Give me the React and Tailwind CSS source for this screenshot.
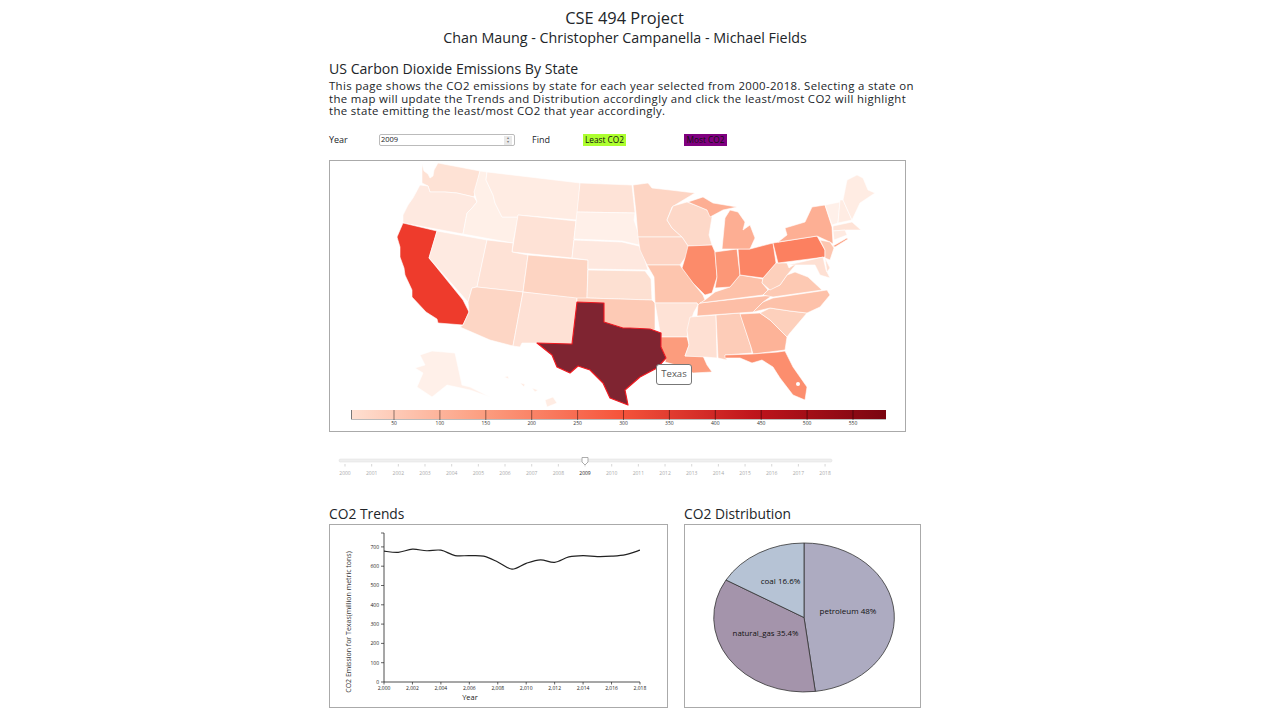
const STATES = [
  ["WA", "#fee2d5", "422,164 424,171 428,174 430,178 433,176 434,170 438,163 480,171 474,197 457,193 445,192 430,192 428,186 422,183"],
  ["OR", "#fee9e0", "420,185 428,186 430,192 445,192 457,193 474,197 477,202 472,208 467,213 463,234 403,223 403,215 408,205 413,198"],
  ["CA", "#ee3b2c", "403,223 437,231 429,258 463,300 469,312 463,325 438,323 437,319 426,312 412,297 412,290 405,275 404,268 400,257 400,247 397,237"],
  ["NV", "#feeae1", "437,231 487,240 477,287 472,288 470,295 468,302 429,258"],
  ["ID", "#fff0e8", "480,171 487,172 486,180 493,195 495,203 500,213 502,217 518,217 513,243 463,234 467,213 472,208 477,202 474,192"],
  ["MT", "#ffece3", "487,172 580,183 577,220 518,215 518,217 502,217 500,213 495,203 493,195 486,180"],
  ["WY", "#fee2d6", "518,215 576,221 572,258 512,252"],
  ["UT", "#fee2d6", "487,240 513,243 512,252 528,255 523,292 477,287"],
  ["CO", "#fdd4c2", "528,255 588,260 587,300 523,292"],
  ["AZ", "#fdd6c5", "477,287 523,292 513,346 490,340 460,327 463,325 469,312 468,302 470,295 472,288"],
  ["NM", "#fee1d5", "523,292 577,298 572,344 537,343 522,343 520,347 513,346"],
  ["ND", "#fee3d7", "580,183 632,185 635,213 577,212"],
  ["SD", "#fff0e9", "577,212 635,213 634,220 640,238 639,245 622,241 574,239"],
  ["NE", "#fee8df", "574,240 622,242 639,246 643,254 648,270 588,269 588,260 572,258"],
  ["KS", "#fde0d2", "588,270 645,271 651,279 652,300 587,298"],
  ["OK", "#fdcab5", "577,298 587,298 652,300 655,303 655,330 650,329 630,328 623,328 604,322 604,303 577,302"],
  ["MN", "#fdd5c4", "633,185 648,183 652,188 670,190 695,193 680,202 672,207 667,220 672,228 682,237 638,237 636,213"],
  ["WI", "#fdd8c8", "673,206 687,202 700,207 707,210 712,217 709,235 712,245 688,246 682,237 672,228 667,220"],
  ["IA", "#fdd4c4", "638,237 682,237 688,246 690,252 685,258 680,265 647,265 640,250"],
  ["MO", "#fdc5ae", "647,265 680,265 682,268 690,278 693,283 703,295 705,300 698,305 697,303 655,303 654,277"],
  ["AR", "#fee2d6", "655,303 697,303 698,305 694,312 690,323 687,337 661,337 660,332"],
  ["LA", "#fc9c7d", "661,337 687,337 689,345 685,356 703,356 707,365 712,372 693,373 683,367 665,362 666,358 661,347"],
  ["MS", "#fee0d3", "690,317 716,315 717,358 705,357 685,356 689,345 687,330"],
  ["AL", "#fdccb8", "716,315 740,313 751,347 752,353 725,355 727,360 718,358"],
  ["GA", "#fdb398", "740,314 760,313 770,320 787,337 785,350 753,354 751,347"],
  ["FL", "#fc8e6e", "725,355 753,354 778,352 785,351 793,367 807,387 805,400 793,395 780,378 773,367 762,360 752,363 740,358 725,358"],
  ["SC", "#fdd0bc", "760,313 770,308 790,311 807,313 790,333 787,337 770,320"],
  ["NC", "#fdc1a9", "763,302 773,298 827,290 830,295 820,307 807,313 790,311 770,308 753,312"],
  ["TN", "#fdbea6", "700,303 773,295 763,302 753,312 697,316 698,305"],
  ["KY", "#fdc1a9", "705,300 715,292 730,287 740,275 763,279 762,283 768,290 763,295 700,303"],
  ["VA", "#fdc9b3", "763,295 768,290 780,285 787,275 795,272 808,277 822,290 773,297"],
  ["WV", "#fdd0bc", "776,263 787,263 789,268 798,262 787,275 780,285 770,290 762,283 763,278"],
  ["IL", "#fc8b6a", "688,246 712,245 715,252 717,277 712,293 705,295 693,283 682,268 685,258"],
  ["IN", "#fc9777", "715,252 737,249 740,275 730,287 715,288 717,277"],
  ["OH", "#fc8565", "738,249 750,249 773,243 776,263 763,278 740,275"],
  ["MI", "#fdae93", "722,249 725,218 730,210 738,212 745,222 743,230 750,225 755,238 750,249"],
  ["MI2", "#fdae93", "688,202 703,197 713,203 737,207 723,210 710,217 707,210"],
  ["PA", "#fc8060", "773,243 817,236 825,250 825,257 778,263"],
  ["NY", "#fdaf94", "778,242 787,235 785,228 805,222 812,207 825,205 832,227 833,244 830,242 817,236"],
  ["NJ", "#fdc6b0", "820,240 830,242 834,248 830,260 825,258 825,250"],
  ["MD", "#fee0d3", "788,265 823,257 826,270 830,278 820,275 815,265 800,265"],
  ["DE", "#fee0d3", "825,258 830,268 827,272"],
  ["VT", "#fff0e9", "825,205 840,202 838,223 832,225"],
  ["NH", "#ffece3", "840,200 843,200 852,220 838,223"],
  ["ME", "#ffece3", "847,180 857,175 863,178 868,190 875,193 860,203 852,220 843,200"],
  ["MA", "#fee3d7", "833,226 852,222 861,230 847,230 833,231"],
  ["CT", "#feeae1", "833,231 845,230 847,235 834,240"],
  ["LI", "#fc9c7d", "833,246 847,238 848,239 835,247"],
  ["AK", "#fff0e9", "420,355 432,351 455,353 462,385 470,387 490,397 470,390 447,385 432,397 417,387 423,373 415,368 425,365"],
  ["HI", "#ffece3", "545,400 553,397 557,403 547,407"],
  ["HI2", "#ffece3", "504,377 508,376 509,379"],
  ["HI3", "#ffece3", "520,383 525,384 524,387"],
  ["HI4", "#ffece3", "532,388 538,390 535,392"],
];

const TEXAS =
  "577,302 604,303 604,322 623,328 630,328 650,329 661,333 661,347 666,358 657,368 640,377 625,390 628,405 610,398 603,383 590,370 578,366 570,373 557,367 552,355 537,343 572,344";

const YEARS = Array.from({ length: 19 }, (_, i) => 2000 + i);
const LEGEND_TICKS = [50, 100, 150, 200, 250, 300, 350, 400, 450, 500, 550];

const TREND = [678, 672, 688, 680, 683, 655, 655, 652, 622, 585, 615, 633, 620, 648, 655, 650, 652, 660, 683];
const trendX = (i) => 384 + i * 14.22;
const trendY = (v) => 682 - v * 0.193;

// catmull-rom through the yearly points, like d3's curve
function trendPath() {
  const pts = TREND.map((v, i) => [trendX(i), trendY(v)]);
  let d = `M${pts[0][0]},${pts[0][1]}`;
  for (let i = 0; i < pts.length - 1; i++) {
    const p0 = pts[i - 1] || pts[i];
    const p1 = pts[i];
    const p2 = pts[i + 1];
    const p3 = pts[i + 2] || p2;
    d += `C${p1[0] + (p2[0] - p0[0]) / 6},${p1[1] + (p2[1] - p0[1]) / 6} ${p2[0] - (p3[0] - p1[0]) / 6},${p2[1] - (p3[1] - p1[1]) / 6} ${p2[0]},${p2[1]}`;
  }
  return d;
}

function UsMap() {
  return (
    <svg viewBox="330 161 575 270" className="block w-[575px] h-[270px]">
      <defs>
        <linearGradient id="reds">
          <stop offset="0" stopColor="#fee0d2" />
          <stop offset="0.25" stopColor="#fc9d7f" />
          <stop offset="0.5" stopColor="#f6553c" />
          <stop offset="0.75" stopColor="#c0151c" />
          <stop offset="1" stopColor="#7a0510" />
        </linearGradient>
      </defs>

      {STATES.map(([id, fill, points]) => (
        <polygon key={id} points={points} fill={fill} stroke="#ffffff" strokeWidth="0.6" />
      ))}
      <circle cx="798" cy="384" r="2" fill="#ffffff" />
      <polygon points={TEXAS} fill="#7f2431" stroke="#f01a20" strokeWidth="1.2" strokeLinejoin="round" />

      {/* color legend */}
      <rect x="351" y="410" width="535" height="9.5" fill="url(#reds)" />
      <path d="M351.5,419 V410" stroke="#777" />
      <path d="M351,419.5 H886" stroke="#bbb" />
      {LEGEND_TICKS.map((t, i) => (
        <g key={t}>
          <path d={`M${394 + i * 45.9},410 V420`} stroke="#000" strokeOpacity="0.45" />
          <text x={394 + i * 45.9} y="424.5" textAnchor="middle" className="text-[5px] fill-[#333]">
            {t}
          </text>
        </g>
      ))}
    </svg>
  );
}

function YearSlider() {
  return (
    <svg viewBox="329 450 592 32" className="block w-[592px] h-8">
      <rect x="339" y="459" width="493" height="3" rx="1.5" fill="#efefef" stroke="#dcdcdc" strokeWidth="0.5" />
      {YEARS.map((y, i) => (
        <g key={y}>
          <path d={`M${345 + i * 26.67},464 V466.5`} stroke="#c4c4c4" strokeWidth="0.7" />
          <text
            x={345 + i * 26.67}
            y="474.5"
            textAnchor="middle"
            className={y === 2009 ? "text-[5px] fill-[#222]" : "text-[5px] fill-[#aaa]"}
          >
            {y}
          </text>
        </g>
      ))}
      <path d="M582,457.5 H588 V462 L585,465 L582,462 Z" fill="#fff" stroke="#999" strokeWidth="0.8" />
    </svg>
  );
}

function TrendChart() {
  return (
    <svg viewBox="330 525 337 182" className="block w-[337px] h-[182px]">
      <path d="M384,533 V682 H640" fill="none" stroke="#222" strokeWidth="0.8" />
      {[0, 100, 200, 300, 400, 500, 600, 700].map((v) => (
        <g key={v}>
          <path d={`M381,${trendY(v)} H384`} stroke="#222" strokeWidth="0.7" />
          <text x="379" y={trendY(v) + 1.8} textAnchor="end" className="text-[5px] fill-[#222]">
            {v}
          </text>
        </g>
      ))}
      <path d="M381,533 H384" stroke="#222" strokeWidth="0.7" />
      {[2000, 2002, 2004, 2006, 2008, 2010, 2012, 2014, 2016, 2018].map((y) => (
        <g key={y}>
          <path d={`M${trendX(y - 2000)},682 V684.5`} stroke="#222" strokeWidth="0.7" />
          <text x={trendX(y - 2000)} y="689.5" textAnchor="middle" className="text-[5px] fill-[#222]">
            {y.toString().replace(/^(\d)/, "$1,")}
          </text>
        </g>
      ))}
      <path d={trendPath()} fill="none" stroke="#222" strokeWidth="1.2" />
      <text x="470" y="699.5" textAnchor="middle" className="text-[7.5px] fill-[#222]">
        Year
      </text>
      <text transform="translate(350.5,622) rotate(-90)" textAnchor="middle" className="text-[7px] fill-[#333]">
        CO2 Emission for Texas(million metric tons)
      </text>
    </svg>
  );
}

function PieChart() {
  return (
    <svg viewBox="685 525 235 182" className="block w-[235px] h-[182px]">
      <path d="M804,617.5 L804,543 A90.5,74.5 0 0 1 815.3,691.4 Z" fill="#adabc1" stroke="#333" strokeWidth="0.8" />
      <path d="M804,617.5 L815.3,691.4 A90.5,74.5 0 0 1 726,580 Z" fill="#a494ab" stroke="#333" strokeWidth="0.8" />
      <path d="M804,617.5 L726,580 A90.5,74.5 0 0 1 804,543 Z" fill="#b6c3d5" stroke="#333" strokeWidth="0.8" />
      <text x="780.5" y="584" textAnchor="middle" className="text-[8px] fill-[#111]">
        coal 16.6%
      </text>
      <text x="848" y="613.5" textAnchor="middle" className="text-[8px] fill-[#111]">
        petroleum 48%
      </text>
      <text x="765.5" y="636" textAnchor="middle" className="text-[7.8px] fill-[#111]">
        natural_gas 35.4%
      </text>
    </svg>
  );
}

export default function App() {
  return (
    <div className="min-h-[720px] bg-white font-['Open_Sans','Noto_Sans',sans-serif] text-[#212529] overflow-hidden">
      <div className="ml-[329px] w-[592px]">

        {/* Title */}
        <div className="pt-[8px] text-center">
          <h1 className="text-[16.4px] leading-[20px] -ml-[1px]">CSE 494 Project</h1>
          <p className="text-[14.3px] leading-[19px]">Chan Maung - Christopher Campanella - Michael Fields</p>
        </div>

        {/* Intro */}
        <h2 className="mt-[13px] text-[14.1px] leading-[18px]">US Carbon Dioxide Emissions By State</h2>
        <p className="text-[11.4px] leading-[12.5px] pt-[2px] tracking-[0.35px] whitespace-nowrap">
          This page shows the CO2 emissions by state for each year selected from 2000-2018. Selecting a state on
          <br />
          the map will update the Trends and Distribution accordingly and click the least/most CO2 will highlight
          <br />
          the state emitting the least/most CO2 that year accordingly.
        </p>

        {/* Controls */}
        <div className="mt-[16px] flex items-center h-[13px] text-[9px]">
          <span className="w-[50px]">Year</span>
          <div className="w-[136px] h-[12px] border border-[#bbb] rounded-[2px] flex items-center justify-between pl-[1px] pr-[2px] text-[7.5px]">
            <span>2009</span>
            <span className="w-[8px] h-[9px] bg-[#e8e8e8] text-[#777] flex flex-col items-center justify-center text-[4px] leading-[4px]">
              <span>▴</span>
              <span>▾</span>
            </span>
          </div>
          <span className="ml-[17px] w-[51px]">Find</span>
          <button className="w-[43px] h-[12px] bg-[#adff2f] text-[8.3px] text-[#111] leading-none">Least CO2</button>
          <button className="ml-[58px] w-[43px] h-[12px] bg-[#800080] text-[8.3px] text-[#111] leading-none">Most CO2</button>
        </div>

        {/* Map */}
        <div className="relative mt-[13px] w-[577px] border border-[#aaa]">
          <UsMap />
          <div className="absolute left-[326px] top-[203px] w-[36px] h-[21px] bg-white border border-[#777] rounded-[3px] flex items-center justify-center text-[9.5px] text-[#555]">
            Texas
          </div>
        </div>

        {/* Year slider */}
        <div className="mt-[18px]">
          <YearSlider />
        </div>

        {/* Charts */}
        <div className="mt-[24px] flex gap-[16px]">
          <div>
            <h3 className="text-[13.8px] leading-[16px] mb-[2px]">CO2 Trends</h3>
            <div className="w-[339px] border border-[#aaa]">
              <TrendChart />
            </div>
          </div>
          <div>
            <h3 className="text-[13.8px] leading-[16px] mb-[2px]">CO2 Distribution</h3>
            <div className="w-[237px] border border-[#aaa]">
              <PieChart />
            </div>
          </div>
        </div>

      </div>
    </div>
  );
}
